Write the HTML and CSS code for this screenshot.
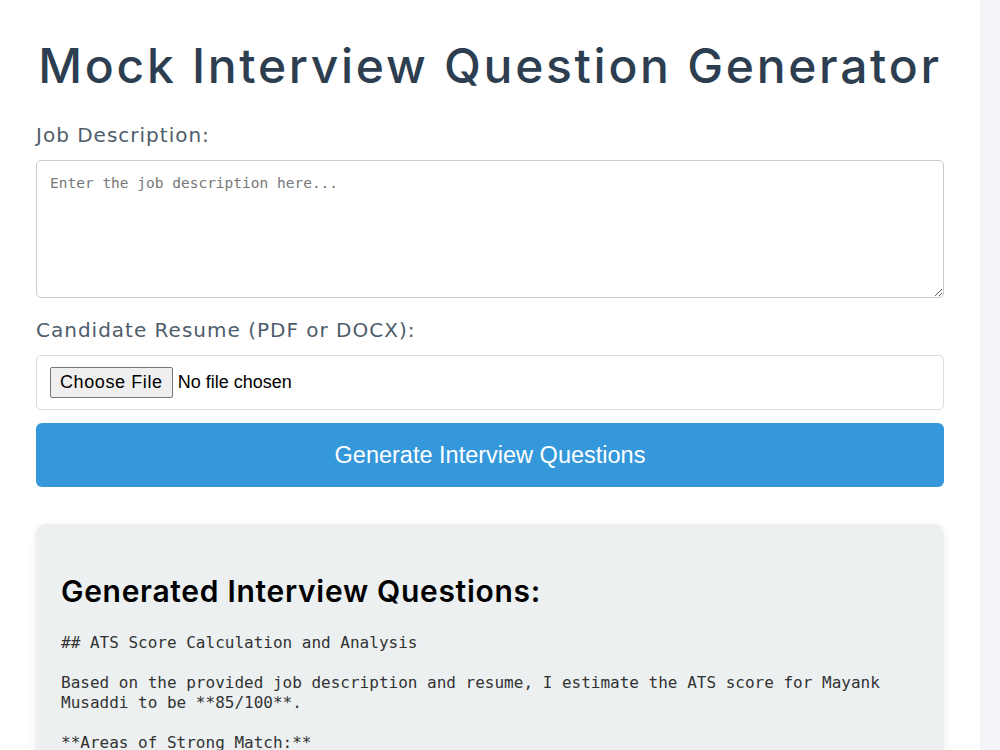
FILE: index.html
```html
<!DOCTYPE html>
<html lang="en">
<head>
    <meta charset="UTF-8">
    <meta name="viewport" content="width=device-width, initial-scale=1.0">
    <title>Mock Interview Question Generator</title>
    <link rel="stylesheet" href="styles.css">
</head>
<body>
    <div class="container">
        <h1>Mock Interview Question Generator</h1>
        <form class="generator-form">
            <label for="job_description">Job Description:</label>
            <textarea id="job_description" name="job_description" placeholder="Enter the job description here..."></textarea>

            <label for="resume">Candidate Resume (PDF or DOCX):</label>
            <div class="file-box">
                <input type="file" id="resume" name="resume" accept=".pdf,.docx">
            </div>

            <button type="submit">Generate Interview Questions</button>
        </form>

        <div class="result">
            <h2>Generated Interview Questions:</h2>
            <pre class="questions">## ATS Score Calculation and Analysis

Based on the provided job description and resume, I estimate the ATS score for Mayank Musaddi to be **85/100**.

**Areas of Strong Match:**</pre>
        </div>
    </div>
</body>
</html>
```

FILE: styles.css
```css
body {
    font-family: 'DejaVu Sans', 'Open Sans', sans-serif;
    margin: 0;
    padding: 0;
    background-color: #f4f4f9;
    color: #333333;
    height: 750px;
    overflow: hidden;
}

.container {
    width: 980px;
    box-sizing: border-box;
    background-color: #ffffff;
    padding: 37px 36px 40px;
    min-height: 100%;
}

h1 {
    font-family: Inter, 'DejaVu Sans', sans-serif;
    font-size: 48px;
    line-height: 58px;
    font-weight: 500;
    text-align: center;
    color: #2c3e50;
    margin: 0 0 28px;
    letter-spacing: 2.7px;
}

form {
    display: flex;
    flex-direction: column;
}

label {
    font-size: 20px;
    line-height: 24px;
    font-weight: 400;
    color: #4e5d6c;
    letter-spacing: 1px;
    margin-bottom: 13px;
}

textarea {
    height: 138px;
    box-sizing: border-box;
    padding: 13px 13px;
    font-family: 'DejaVu Sans Mono', monospace;
    font-size: 14.5px;
    line-height: 18px;
    border: 1px solid #cccccc;
    border-radius: 5px;
    margin-bottom: 20px;
    outline: none;
}

textarea::placeholder {
    color: #777777;
}

.file-box {
    display: flex;
    align-items: center;
    height: 55px;
    box-sizing: border-box;
    padding: 0 13px;
    border: 1px solid #dddddd;
    border-radius: 5px;
}

input[type="file"] {
    font-family: 'Liberation Sans', Arial, sans-serif;
    font-size: 18px;
    color: #000000;
}

input[type="file"]::file-selector-button {
    font: inherit;
    padding: 4px 9px;
    margin-right: 5px;
    background-color: #efefef;
    border: 1px solid #767676;
    border-radius: 2px;
    letter-spacing: 0.6px;
}

button {
    margin-top: 13px;
    height: 64px;
    background-color: #3498db;
    color: #ffffff;
    border: none;
    border-radius: 6px;
    font-family: 'Liberation Sans', Arial, sans-serif;
    font-size: 23.5px;
    cursor: pointer;
}

button:hover {
    background-color: #2980b9;
}

.result {
    margin-top: 37px;
    background-color: #ecf0f1;
    border-radius: 10px;
    padding: 25px;
    box-shadow: 0 2px 8px rgba(0, 0, 0, 0.08);
}

.result h2 {
    font-family: Inter, 'DejaVu Sans', sans-serif;
    font-size: 30px;
    line-height: 36px;
    font-weight: 600;
    color: #000000;
    margin: 24px 0 24px;
    letter-spacing: 0.7px;
}

.questions {
    font-family: 'DejaVu Sans Mono', monospace;
    font-size: 16px;
    line-height: 20px;
    color: #333333;
    white-space: pre-wrap;
    margin: 0;
}
```
